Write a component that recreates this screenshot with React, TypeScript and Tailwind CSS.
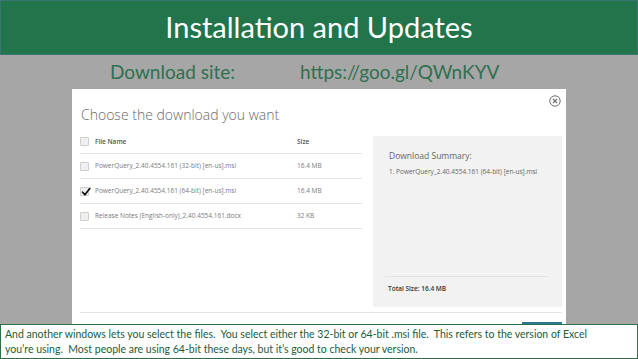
const ROWS = [
  { name: 'PowerQuery_2.40.4554.161 (32-bit) [en-us].msi', size: '16.4 MB', checked: false },
  { name: 'PowerQuery_2.40.4554.161 (64-bit) [en-us].msi', size: '16.4 MB', checked: true },
  { name: 'Release Notes (English-only)_2.40.4554.161.docx', size: '32 KB', checked: false },
]

function Checkbox({ checked }: { checked?: boolean }) {
  return (
    <span className="relative w-[9px] h-[9px] shrink-0 border border-[#cfcfcf] bg-[#efefef] rounded-[1px]">
      {checked && (
        <svg viewBox="0 0 10 10" className="absolute left-[0px] top-[-1px] w-[10px] h-[10px]">
          <path d="M1.6 5.2 L3.9 7.8 L8.8 1.4" fill="none" stroke="#111" strokeWidth="1.7" strokeLinecap="round" strokeLinejoin="round" />
        </svg>
      )}
    </span>
  )
}

export default function App() {
  return (
    <div className="w-[638px] h-[359px] flex flex-col bg-[#a6a6a6] overflow-hidden">
      <header className="h-[55px] shrink-0 bg-[#22744a] border border-[#3a7571] flex items-center justify-center">
        <h1 className="text-white text-[29px] leading-none font-['Lato',sans-serif] pb-[2px]">Installation and Updates</h1>
      </header>

      <div className="h-[269px] shrink-0 flex flex-col overflow-hidden">
        <div className="h-[34px] shrink-0 flex items-center pl-[110px] text-[19px] text-[#2f7050] font-['Lato',sans-serif]">
          <span className="w-[190px]">Download site:</span>
          <span>https://goo.gl/QWnKYV</span>
        </div>

        <div className="ml-[72px] w-[494px] h-[260px] shrink-0 bg-white flex flex-col font-['Open_Sans',sans-serif]">
          <div className="flex justify-between items-start pl-[9px] pr-[5px] pt-[6px]">
            <div className="mt-[10px] text-[14px] leading-[20px] font-light text-[#6a6a6a]">Choose the download you want</div>
            <svg viewBox="0 0 12 12" className="w-[12px] h-[12px]">
              <circle cx="6" cy="6" r="5.2" fill="none" stroke="#6e6e6e" strokeWidth="1" />
              <path d="M4 4 L8 8 M8 4 L4 8" stroke="#6e6e6e" strokeWidth="1.1" />
            </svg>
          </div>

          <div className="mt-[5px] flex items-start">
            <div className="ml-[8px] w-[282px]">
              <div className="h-[24px] flex items-center border-b border-[#e4e4e4] text-[6.5px] font-semibold text-[#555]">
                <Checkbox />
                <span className="ml-[6px] w-[202px]">File Name</span>
                <span>Size</span>
              </div>
              {ROWS.map((r) => (
                <div key={r.name} className="h-[25px] flex items-center border-b border-[#e4e4e4] text-[6.5px] text-[#7a7a7a]">
                  <Checkbox checked={r.checked} />
                  <span className="ml-[6px] w-[202px] whitespace-nowrap">{r.name}</span>
                  <span>{r.size}</span>
                </div>
              ))}
            </div>

            <div className="ml-[11px] mt-[6px] w-[189px] h-[171px] bg-[#f2f2f2] flex flex-col">
              <div className="pt-[14px] pl-[16px] text-[8.5px] leading-[12px] text-[#666]">Download Summary:</div>
              <div className="mt-[5px] pl-[16px] text-[6.5px] leading-[10px] text-[#666] whitespace-nowrap">
                1. PowerQuery_2.40.4554.161 (64-bit) [en-us].msi
              </div>
              <div className="flex-1" />
              <div className="ml-[12px] mr-[15px] h-px bg-[#e2e2e2]" />
              <div className="pl-[15px] pt-[6px] pb-[12px] text-[6.5px] leading-[12px] font-semibold text-[#333]">Total Size: 16.4 MB</div>
            </div>
          </div>

          <div className="mt-[5px] ml-[8px] mr-[4px] h-px bg-[#e4e4e4]" />
          <div className="mt-[9px] mr-[4px] self-end w-[40px] h-[24px] bg-[#2b7896]" />
        </div>
      </div>

      <div className="h-[35px] shrink-0 bg-white border border-[#2e6e4b] px-[4px] pt-[2px] text-[10.5px] leading-[15px] text-[#215c3c] font-['Lato',sans-serif] whitespace-pre">
        <div>And another windows lets you select the files.  You select either the 32-bit or 64-bit .msi file.  This refers to the version of Excel</div>
        <div>you’re using.  Most people are using 64-bit these days, but it’s good to check your version.</div>
      </div>
    </div>
  )
}
